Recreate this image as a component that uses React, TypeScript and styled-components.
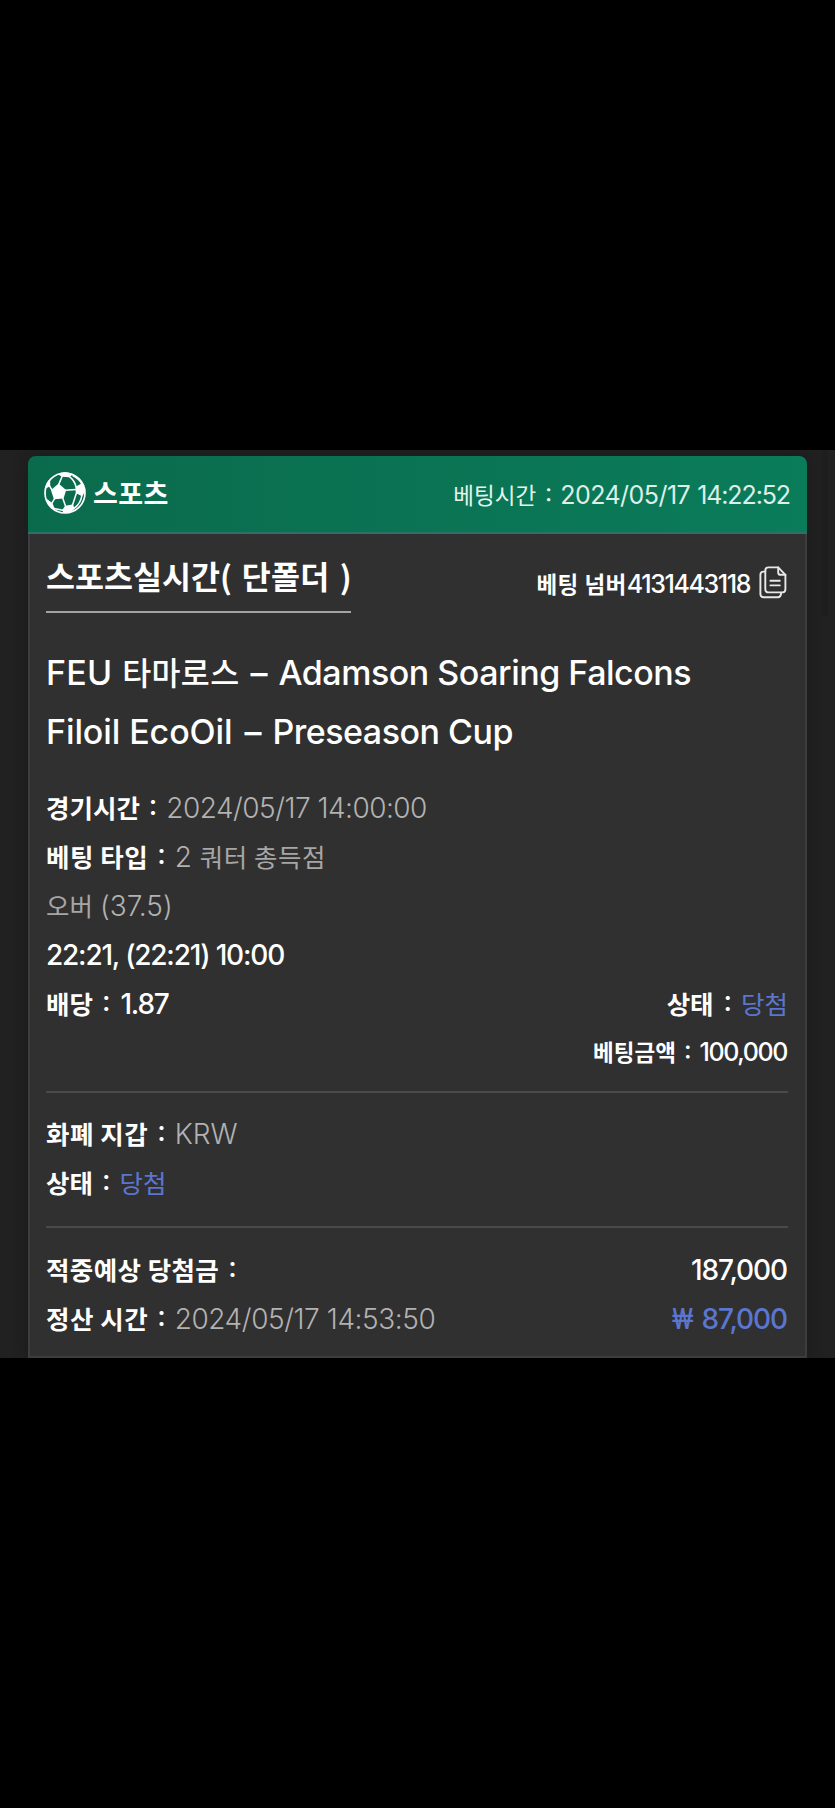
import React from "react";
import styled, { createGlobalStyle } from "styled-components";

const GlobalStyle = createGlobalStyle`
  * { box-sizing: border-box; }
  body { margin: 0; background: #000; }
`;

const hangulFont = '"Noto Sans CJK KR", sans-serif';
const latinFont = 'Inter, "Noto Sans CJK KR", sans-serif';

const Page = styled.div`
  min-height: 1808px;
  padding: 450px 0;
  background: #000;
`;

const Screen = styled.main`
  position: relative;
  height: 908px;
  padding: 6px 28px 0;
  overflow: hidden;
  background: #212121;
`;

const ScrollThumb = styled.div`
  position: absolute;
  top: 0;
  right: 7px;
  width: 6px;
  height: 166px;
  border-radius: 0 0 3px 3px;
  background: #1e1e1f;
`;

const Card = styled.article`
  height: 902px;
  display: flex;
  flex-direction: column;
  border-radius: 8px 8px 0 0;
  box-shadow: 0 0 14px rgba(20, 21, 26, 0.55);
`;

const CardHeader = styled.header`
  height: 78px;
  display: flex;
  justify-content: space-between;
  padding: 0 17px 0 16px;
  border-bottom: 2px solid #2f6f67;
  border-radius: 8px 8px 0 0;
  background: linear-gradient(90deg, #0a6b4c, #0a7c5a);
`;

const Brand = styled.div`
  display: flex;
  align-items: center;
  height: 73px;
  gap: 7px;
`;

const HeaderTime = styled.div`
  display: flex;
  align-items: baseline;
  line-height: 76px;
`;

const CardBody = styled.div`
  flex: 1;
  padding: 19px 17px 0 16px;
  border: 2px solid #3c3d41;
  border-top: 0;
  background: #303030;
`;

type RunProps = { $size?: number; $weight?: number; $track?: number; $gap?: number; $tone?: string };

const Hangul = styled.span<RunProps>`
  font-family: ${hangulFont};
  font-size: ${(p) => p.$size ?? 25.5}px;
  font-weight: ${(p) => p.$weight ?? 700};
  letter-spacing: ${(p) => p.$track ?? 0}px;
  margin-left: ${(p) => p.$gap ?? 0}px;
  color: ${(p) => p.$tone ?? "#fff"};
  white-space: pre;
`;

const Latin = styled.span<RunProps>`
  font-family: ${latinFont};
  font-size: ${(p) => p.$size ?? 28}px;
  font-weight: ${(p) => p.$weight ?? 500};
  letter-spacing: ${(p) => p.$track ?? 0}px;
  margin-left: ${(p) => p.$gap ?? 0}px;
  color: ${(p) => p.$tone ?? "#fff"};
  font-feature-settings: "calt" 0;
  white-space: pre;
`;

const Colon = styled(Latin)`
  font-feature-settings: "case" 1;
`;

const Won = styled(Latin)`
  font-family: Roboto, sans-serif;
`;

const TitleRow = styled.div`
  display: flex;
  justify-content: space-between;
  align-items: flex-start;
  height: 61px;
  line-height: 44px;
`;

const Title = styled.h1`
  display: flex;
  align-items: baseline;
  width: 305px;
  height: 60px;
  margin: 0;
  border-bottom: 2px solid #a3a3a3;
`;

const BetNumber = styled.div`
  display: flex;
  align-items: baseline;
  margin: 8px 1px 0 0;

  svg { align-self: center; margin: 0 0 2px 9px; }
`;

const MatchInfo = styled.div`
  margin: 27px 0 20px;
`;

const MatchLine = styled.div`
  display: flex;
  align-items: baseline;
  height: 60.5px;
  line-height: 60px;
`;

const Row = styled.div<{ $height?: number }>`
  display: flex;
  align-items: baseline;
  height: ${(p) => p.$height ?? 49}px;
  line-height: ${(p) => p.$height ?? 49}px;

  &::before {
    content: "\\200b";
    width: 0;
    font-family: ${hangulFont};
    font-size: 25.5px;
  }
`;

const Trailing = styled.div`
  display: flex;
  align-items: baseline;
  margin-left: auto;
`;

const TrailingAmount = styled(Trailing)`
  margin-right: 1px;
`;

const Divider = styled.hr<{ $before: number; $after: number }>`
  height: 2px;
  margin: ${(p) => p.$before}px 0 ${(p) => p.$after}px;
  border: 0;
  background: #4a4a4a;
`;

const GREY = "#b2b2b2";
const GREY_HANGUL = "#a6a6a6";
const BLUE = "#5b76cf";

function BallIcon() {
  return (
    <svg width="42" height="42" viewBox="0 0 124 124" fill="#fff" stroke="#fff" strokeWidth="4.5" strokeLinejoin="round">
      <circle cx="62" cy="62" r="59" fill="none" strokeWidth="5" />
      <path d="M43 37 63 54 56 76 31 78 23 54Z" />
      <path d="M95 45 112 36 120 55 112 69 96 61Z" />
      <path d="M45 6Q62 0 82 7L74 13 54 12Z" />
      <path d="M6 46Q8 33 16 25L16 40Z" />
      <path d="M8 82 23 93 29 108Q14 99 8 82Z" />
      <path d="M64 102 84 98 88 108Q76 119 60 119L56 113Z" />
      <path fill="none" d="M54 12 43 38M16 40 24 54M62 54 95 52M55 76 64 102M32 77 23 93M96 61 84 98M74 13Q90 24 95 45M84 10Q106 22 112 36M112 69Q108 94 88 108M29 108 56 113" />
    </svg>
  );
}

function CopyIcon() {
  return (
    <svg width="28" height="33" viewBox="0 0 28 33" fill="none" stroke="#e8e8e8" strokeWidth="1.9" strokeLinejoin="round" strokeLinecap="round">
      <path d="M9.5 1.4H19.2L26.4 8.8V23.2Q26.4 26.4 23.2 26.4H9.5Q6.3 26.4 6.3 23.2V4.6Q6.3 1.4 9.5 1.4Z" />
      <path d="M19.2 1.4V6.4Q19.2 8.8 21.6 8.8H26.4" />
      <path d="M6.3 5.6H4.6Q1.4 5.6 1.4 8.8V28Q1.4 31.2 4.6 31.2H18.6Q22 31.2 22.2 26.6" />
      <path d="M11.4 14.8H20.8M11.4 19.4H20.8" />
    </svg>
  );
}

export default function App() {
  return (
    <>
      <GlobalStyle />
      <Page>
        <Screen>
          <ScrollThumb />
          <Card>
            <CardHeader>
              <Brand>
                <BallIcon />
                <Hangul $size={27} $track={0.4}>스포츠</Hangul>
              </Brand>
              <HeaderTime>
                <Hangul $size={22.5} $weight={400} $tone="#e4f5ee">베팅시간</Hangul>
                <Colon $size={25} $weight={400} $gap={9} $tone="#e4f5ee">:</Colon>
                <Latin $size={25} $weight={400} $gap={8} $track={-0.55} $tone="#dcefe8">2024/05/17</Latin>
                <Latin $size={25} $weight={400} $gap={7} $track={-1.1} $tone="#dcefe8">14:22:52</Latin>
              </HeaderTime>
            </CardHeader>

            <CardBody>
              <TitleRow>
                <Title>
                  <Hangul $size={31.5}>스포츠실시간(</Hangul>
                  <Hangul $size={31.5} $gap={10} $track={0.3}>단폴더</Hangul>
                  <Hangul $size={31.5} $gap={10}>)</Hangul>
                </Title>
                <BetNumber>
                  <Hangul $size={22.5} $track={0.5}>베팅 넘버</Hangul>
                  <Latin $size={25} $track={-1.4}>4131443118</Latin>
                  <CopyIcon />
                </BetNumber>
              </TitleRow>

              <MatchInfo>
                <MatchLine>
                  <Latin $size={34} $track={0.2}>FEU</Latin>
                  <Hangul $size={31.5} $weight={500} $gap={10} $track={0.3}>타마로스</Hangul>
                  <Latin $size={34} $gap={11}>–</Latin>
                  <Latin $size={34} $gap={11} $track={-0.48}>Adamson Soaring Falcons</Latin>
                </MatchLine>
                <MatchLine>
                  <Latin $size={34} $track={-0.1}>Filoil EcoOil</Latin>
                  <Latin $size={34} $gap={12}>–</Latin>
                  <Latin $size={34} $gap={11} $track={-0.5}>Preseason Cup</Latin>
                </MatchLine>
              </MatchInfo>

              <Row>
                <Hangul>경기시간</Hangul>
                <Colon $gap={9}>:</Colon>
                <Latin $weight={300} $gap={9} $track={-0.52} $tone={GREY}>2024/05/17 14:00:00</Latin>
              </Row>
              <Row>
                <Hangul $track={0.5}>베팅 타입</Hangul>
                <Colon $gap={9}>:</Colon>
                <Latin $weight={300} $gap={9} $tone={GREY}>2</Latin>
                <Hangul $weight={400} $gap={8} $track={0.5} $tone={GREY_HANGUL}>쿼터 총득점</Hangul>
              </Row>
              <Row>
                <Hangul $weight={400} $tone={GREY_HANGUL}>오버</Hangul>
                <Latin $weight={300} $gap={7} $tone={GREY}>(37.5)</Latin>
              </Row>
              <Row $height={50}>
                <Latin $track={-1.2}>22:21, (22:21) 10:00</Latin>
              </Row>
              <Row $height={48}>
                <Hangul>배당</Hangul>
                <Colon $gap={9}>:</Colon>
                <Latin $gap={10} $track={-1.2}>1.87</Latin>
                <Trailing>
                  <Hangul>상태</Hangul>
                  <Colon $gap={10}>:</Colon>
                  <Hangul $weight={400} $gap={9} $tone={BLUE}>당첨</Hangul>
                </Trailing>
              </Row>
              <Row $height={46}>
                <TrailingAmount>
                  <Hangul $size={22.5}>베팅금액</Hangul>
                  <Colon $size={25} $gap={8}>:</Colon>
                  <Latin $size={25} $gap={8} $track={-1.4}>100,000</Latin>
                </TrailingAmount>
              </Row>

              <Divider $before={18} $after={15} />

              <Row>
                <Hangul $track={0.5}>화폐 지갑</Hangul>
                <Colon $gap={9}>:</Colon>
                <Latin $weight={300} $gap={9} $tone={GREY}>KRW</Latin>
              </Row>
              <Row>
                <Hangul>상태</Hangul>
                <Colon $gap={9}>:</Colon>
                <Hangul $weight={400} $gap={9} $tone={BLUE}>당첨</Hangul>
              </Row>

              <Divider $before={20} $after={16} />

              <Row>
                <Hangul $track={0.4}>적중예상 당첨금</Hangul>
                <Colon $gap={9}>:</Colon>
                <TrailingAmount>
                  <Latin $track={-1.1}>187,000</Latin>
                </TrailingAmount>
              </Row>
              <Row>
                <Hangul $track={0.5}>정산 시간</Hangul>
                <Colon $gap={9}>:</Colon>
                <Latin $weight={300} $gap={9} $track={-0.42} $tone={GREY}>2024/05/17 14:53:50</Latin>
                <TrailingAmount>
                  <Won $size={29} $weight={400} $tone={BLUE}>₩</Won>
                  <Latin $gap={8} $track={-1.1} $tone={BLUE}>87,000</Latin>
                </TrailingAmount>
              </Row>
            </CardBody>
          </Card>
        </Screen>
      </Page>
    </>
  );
}
